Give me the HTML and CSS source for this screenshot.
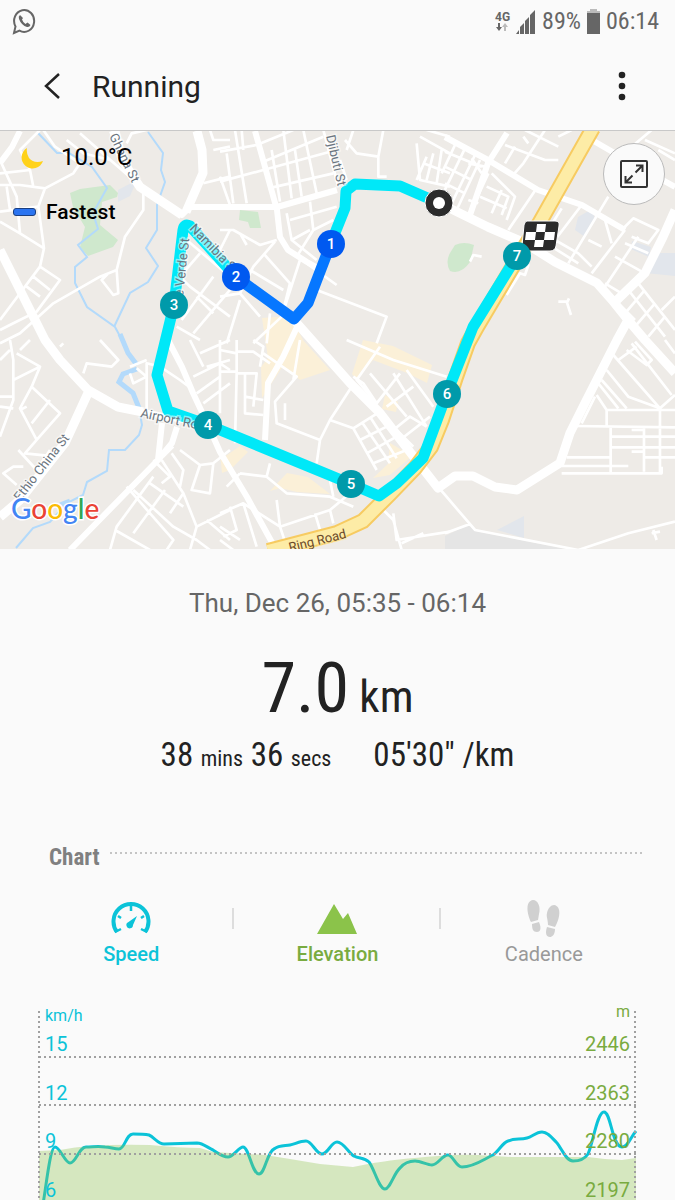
FILE: index.html
```html
<!DOCTYPE html>
<html lang="en">
<head>
    <meta charset="UTF-8">
    <meta name="viewport" content="width=device-width, initial-scale=1.0">
    <title>Running</title>
    <link rel="stylesheet" href="styles.css">
</head>
<body>

<!-- Status bar -->
<div class="status">
    <svg class="status-app" width="24" height="28" viewBox="0 0 24 28" fill="none" stroke="#666" stroke-width="2">
        <path d="M2 26L3.500 19.500A10 11 0 1 1 7.500 23.700Z"/>
        <path d="M8 8q-2 1.500-1 4q2.500 6.500 8 8q2.500 .5 3.500-2l-3-2.500l-2 1.500q-2.500-1.500-3.500-4.500l1-1.500z" fill="#666" stroke="none"/>
    </svg>
    <div class="status-right">
        <div class="network">
            <span>4G</span>
            <svg width="14" height="8" viewBox="0 0 14 8"><path d="M3 0h2v4h2l-3 4l-3-4h2z" fill="#666"/><path d="M9 8h2v-4h2l-3-4l-3 4h2z" fill="#bbb"/></svg>
        </div>
        <svg width="20" height="25" viewBox="0 0 20 25" fill="#666"><path d="M0 25l3-4v4zM4 25v-7l4-4v11zM9 25v-13l4-4v17zM14 25v-19l5-5v24z"/></svg>
        <span>89%</span>
        <svg width="13" height="25" viewBox="0 0 13 25"><path d="M3 0h7v2h3v4h-13v-4h3z" fill="#bbb"/><path d="M0 4h13v21h-13z" fill="#666"/></svg>
        <span>06:14</span>
    </div>
</div>

<!-- Title bar -->
<header class="header">
    <button class="icon-button" aria-label="Back">
        <svg width="20" height="30" viewBox="0 0 20 30" fill="none" stroke="#222" stroke-width="2.500"><path d="M17 3L4 15L17 27"/></svg>
    </button>
    <h1>Running</h1>
    <button class="icon-button" aria-label="More options">
        <svg width="20" height="30" viewBox="0 0 20 30" fill="#222"><circle cx="10" cy="4" r="3.300"/><circle cx="10" cy="15" r="3.300"/><circle cx="10" cy="26" r="3.300"/></svg>
    </button>
</header>

<!-- Route map -->
<section class="map">
    <svg class="map-canvas" viewBox="0 131 675 418">
        <path class="block" d="M0 131H675V549H0Z"/>
        <path class="ground" d="M445 536L468 525L475 531L575 551H445Z"/>

        <!-- parks, water and shops -->
        <path class="park" d="M70 193L80 189L110 185L118 193L117 197L102 202L100 225L118 240L113 247L88 256L80 247L85 227L73 207Z"/>
        <path class="park" d="M240 210L258 212L261 228L250 228L248 222L239 220Z"/>
        <path class="park" d="M455 245Q464 241 474 245L470 262Q461 275 450 271Q445 262 450 253Z"/>
        <path class="pond" d="M118 190L137 180L130 196L118 202ZM578 217L592 209L595 220L585 237L575 230ZM648 253H675V276L645 273ZM632 241L651 247L649 257L631 249ZM497 530L524 516V538Z"/>
        <path class="shops" d="M262 318L291 316L303 340L330 370L300 380L283 366L262 398L261 367L268 358ZM363 340L393 346L432 365L427 383L407 373L373 360L357 380L352 374ZM390 443L412 456L390 475L373 478L388 464ZM287 473L308 477L330 494L297 492L280 488L270 491ZM220 460L240 446L248 452L230 470ZM220 453L230 470L222 473ZM385 395L398 402L396 412L382 409Z"/>
        <path class="river" d="M38 133L57 153L69 153L92 167L107 188L93 213L98 229L78 245L87 257L75 267V283L87 307L115 327L122 340L128 353L137 365M148 132L163 153L161 170L165 182L157 205V230L146 248L158 266L148 282L130 293L114 327M139 408L142 425L139 435L125 450H109L107 471L87 482L83 495L67 503L50 522L33 528L16 548"/>
        <path class="river wide" d="M120 334L128 353L137 365M137 369L123 374L119 382L133 393L139 408M60 505L70 501"/>

        <!-- side streets -->
        <g class="street" transform="translate(0 130) scale(.3333)">
            <path d="M130 0L165 50L240 100L220 130L135 175L115 230L132 355L120 410L180 450L110 545L40 580L0 600M0 165L60 165L135 175M0 245L115 230M0 275L60 310L132 355M0 90L50 200L60 310M20 170L30 240M100 170L90 120L60 60L120 0M90 120L0 130M240 10L320 80L400 150M200 30L250 70L330 90M430 185V240L375 320L350 420L300 440L160 520L60 610L0 640M350 420L355 490L340 495L305 450L325 430M120 410L60 490L0 570M80 470L120 500M100 440L150 480M380 40L395 10L440 0"/>
            <path d="M610 160L690 140M660 140L690 225M630 0L640 30L690 30M640 60L690 50M560 330L690 440M600 370L540 440M540 440L570 470L690 560M545 570L640 440M580 610L690 480M530 590L600 630M590 500L640 550M690 300L640 400"/>
        </g>
        <g class="street" transform="translate(220 130) scale(.3333)">
            <path d="M0 65L110 45L220 0M0 155L130 120L330 65M130 95L310 20M145 175L340 130M45 0L80 220M20 70L40 220M190 0L215 205M250 0L290 190M155 60L180 215M225 60L245 200M310 0L355 170M70 60L65 0M375 30L410 70L475 80L475 140L500 140M380 60L400 0M475 80L490 0M360 90L380 150"/>
            <path d="M590 40L600 150L690 170M620 80L590 150M600 20L690 70M640 70L620 150M665 60L650 160M610 100L690 130M690 20L620 0M200 250L215 330L290 390M270 215L280 300L230 380M210 270L350 230M280 300L340 270M215 330L270 300M0 300H40L120 345L170 330M60 490L100 410L165 335M0 500L60 490L120 560M130 370L210 460L190 540M240 390L185 560L100 640M290 480L500 560L470 640M90 420L190 480M60 510L20 640M150 550L140 640M60 310L80 345M260 400L350 465"/>
        </g>
        <g class="street" transform="translate(445 130) scale(.3333)">
            <path d="M30 45L-10 130M60 55L-20 220M90 75L20 220M105 90L35 240M0 110L80 150M0 65L110 110M0 160L60 190M70 100L120 110M80 85L110 130M130 130L70 260M140 130L210 200L185 270M125 170L190 200L170 255M170 180L140 250M105 200L185 235M100 220L70 210M180 45L300 90L340 90M240 0L340 50M235 20L250 40M300 0L235 100L200 140M180 100L210 50M275 175L190 300M340 20L380 0"/>
            <path d="M490 200L370 400M350 235L310 300M410 225L330 330L400 370L440 410M430 330L470 350M540 300L440 430M580 320L480 470M320 350L400 400M480 270L500 340M530 300L565 265L640 300L610 340L560 320M510 380L600 430M540 340L610 370M480 460L530 490M620 0L560 50M600 30L690 70M690 90L640 60M580 460L690 600M550 480L660 620M520 520L570 570M600 480L540 550M630 520L570 590M660 560L610 620M690 500L650 540"/>
            <path class="stub" d="M230 400L250 405L240 435L225 430L185 495M75 395L85 375L110 380M340 515L365 515L378 555M365 520L372 505"/>
        </g>
        <g class="street" transform="translate(0 340) scale(.3333)">
            <path d="M30 0L40 60L40 180L0 290M0 60L30 30M0 170H40M0 200L40 205M50 40L120 80L40 120M120 80L95 140L60 205L110 300L75 340L170 350M95 140L180 220L110 300M150 180L95 250M60 210L80 200M55 330L110 390L150 330M70 380H40L10 400L50 435M300 0L355 60L335 80L260 70L250 100M180 20L190 10M60 30L90 0M390 80L440 60M390 100L400 130L440 110V70L480 80M440 100V230M480 80L540 120L580 150M410 85L440 110"/>
            <path d="M570 0L610 80M660 0V220M600 40L690 0M620 80L690 60M580 110L660 70L690 90M590 160L660 110M610 190L690 130M400 450L520 560L590 600L630 630M345 570L450 630M460 410L350 560L330 630M380 440L520 600L500 630M495 450L400 580M540 330L600 375L640 370L690 330M600 375L575 450L630 460L640 370M485 360L550 460L510 520M515 340L550 390L540 440M550 460L590 560L690 510M590 560L570 630M450 430L550 500M620 540L690 600M460 360L510 410L485 430M520 320L490 350"/>
        </g>
        <g class="street" transform="translate(220 340) scale(.3333)">
            <path d="M50 0V100L45 310M0 30L50 40M0 95H50M50 100H110L100 200M75 100V220L130 225M75 170L130 180M50 35H100L150 70M100 0L130 20L120 80M130 40L230 110L165 185L170 250L300 300L330 240L395 140M300 300L290 370M195 190V240M240 0L220 120M330 240L400 265L470 390M400 265L480 215M425 245L510 370M450 230L530 355M470 210L580 320M420 300L500 260M440 340L530 290M460 370L560 330M520 270L570 230L620 260M540 300L630 230M500 200L580 140M470 190L430 130L400 110M480 20L410 120L470 190L540 100M380 0L520 60L680 110M520 100L620 260M560 90L640 200M450 100L560 230"/>
            <path d="M0 520L70 490L180 560L330 510L390 460M70 490L110 620M0 600L40 630M180 560L200 620M60 400L140 410L200 460L330 470L400 500M60 400L20 440M140 410L150 370M170 480L180 560M285 520L300 570M330 510L340 550M480 500L520 540L545 630M520 520L530 600L690 575M545 610L610 580M0 560L60 600M30 500L50 570L10 590M330 420L340 470"/>
        </g>
        <g class="street" transform="translate(445 340) scale(.3333)">
            <path d="M485 90L550 170L645 205M505 45L645 205L690 165M520 60L575 20M545 30L605 75L620 60L570 5M560 10L680 165M660 0L690 40M485 210H690M390 258L690 262M500 290H690M500 322H690M365 352H495M597 352H690M350 378H550M350 400H650V380M485 210V258M497 258V400M597 262V395M645 205V400M470 120L545 205M460 130L520 205M455 165L485 210M450 170L410 250M560 270H597M560 335H597M0 465L90 570L400 630L550 580L690 545M0 580L75 552M625 570L635 600M620 580L645 575M-30 430L0 465"/>
        </g>

        <!-- main roads -->
        <path class="road" d="M20 131L12 147L0 163M112 131L122 160L140 187L182 215L190 207H277L337 190M197 131L202 150L203 173L186 212M255 131L277 210L280 237L288 250L307 262L325 272M0 250L20 290L45 340L60 360L88 390L118 407L143 412L208 425M70 550L158 460L162 423M177 427L172 443L158 460M168 340L182 367L193 393L208 425L220 452L247 497L275 548M298 325L283 357L268 383L265 440M445 137L488 160L538 190L582 205L625 230M507 133L488 163L470 215M592 140L630 162L675 187"/>
        <path class="road major" d="M0 250L20 290L45 340L60 360L88 390L118 407L143 412M88 393L65 443L20 500L0 517M294 320L350 383L380 413L410 452L438 488L455 476H473L495 487L517 490L560 463L570 433L585 403L617 340L628 320L612 300L597 283L555 262L525 243L488 227L439 203M617 300L645 273L663 237L675 210M612 300L628 320L645 340L675 373M115 131L122 160L140 187L182 215M197 131L202 150L203 173L186 212"/>
        <path class="ring-edge" d="M593 128L540 222L516 261L477 327L468 343L456 377L442 420L431 447L415 468L390 494L363 521L337 533L268 551"/>
        <path class="ring" d="M593 128L540 222L516 261L477 327L468 343L456 377L442 420L431 447L415 468L390 494L363 521L337 533L268 551"/>

        <!-- recorded route -->
        <path class="route" d="M439 203L400 186L355 184L346 191L345 208L331 243M236 277L190 226Q184 223 183 230L174 305L157 375L168 411L208 425L351 484L379 496L397 483L423 458L447 393L473 327L517 256"/>
        <path class="route fastest" d="M331 243L308 303L294 319L236 277"/>

        <g class="street-name">
            <text transform="translate(109 136) rotate(64)">Ghana St</text>
            <text transform="translate(326 136) rotate(77)">Djibuti St</text>
            <text transform="translate(189 229) rotate(46)">Namibia St</text>
            <text transform="translate(183 297) rotate(-84)">e Verde St</text>
            <text transform="translate(140 417) rotate(12)">Airport Road</text>
            <text transform="translate(20 502) rotate(-52)">Ethio China St</text>
            <text class="ring-name" transform="translate(290 552) rotate(-14)">Ring Road</text>
        </g>

        <!-- finish flag and start point -->
        <path d="M527 221H555Q560 221 559 226L556 246Q555 251 550 251H526Q521 251 522 246L524 225Q525 221 527 221Z" fill="#2b2b2b" stroke="#fff"/>
        <path d="M537 224H546L545 232H536ZM526 232H536L535 240H525ZM545 232H555L554 240H544ZM535 240H544L543 247H534Z" fill="#fff"/>
        <circle cx="439" cy="203" r="14" fill="#2b2b2b" stroke="#fff"/>
        <circle cx="439" cy="203" r="6" fill="#fff"/>

        <g class="marker">
            <circle class="fast" cx="331" cy="244" r="14"/><text x="331" y="249">1</text>
            <circle class="fast" cx="236" cy="277" r="14"/><text x="236" y="282">2</text>
            <circle cx="174" cy="305" r="14"/><text x="174" y="310">3</text>
            <circle cx="208" cy="425" r="14"/><text x="208" y="430">4</text>
            <circle cx="351" cy="484" r="14"/><text x="351" y="489">5</text>
            <circle cx="447" cy="394" r="14"/><text x="447" y="399">6</text>
            <circle cx="517" cy="256" r="14"/><text x="517" y="261">7</text>
        </g>

        <text class="google" x="11" y="519"><tspan fill="#4285f4">G</tspan><tspan fill="#ea4335">o</tspan><tspan fill="#fbbc05">o</tspan><tspan fill="#4285f4">g</tspan><tspan fill="#34a853">l</tspan><tspan fill="#ea4335">e</tspan></text>
    </svg>

    <div class="map-info">
        <div class="weather">
            <svg width="24" height="24" viewBox="0 0 24 24"><path d="M7 3A11 11 0 1 0 23 16Q14 19 9 13Q6 8 7 3Z" fill="#ffd21a"/></svg>
            <span>10.0°C</span>
        </div>
        <div class="legend"><i></i><span>Fastest</span></div>
    </div>
    <button class="expand" aria-label="Full screen map">
        <svg width="28" height="28" viewBox="0 0 28 28" fill="none" stroke="#333" stroke-width="2"><rect x="1" y="1" width="26" height="26" rx="1"/><path d="M15.500 12.500L22 6M16 5.500H22.500V12M12.500 15.500L6 22M5.500 16V22.500H12"/></svg>
    </button>
</section>

<!-- Summary -->
<section class="summary">
    <p class="date">Thu, Dec 26, 05:35 - 06:14</p>
    <p class="distance">7.0<small> km</small></p>
    <div class="stats">
        <span>38 <small>mins</small> 36 <small>secs</small></span>
        <span>05'30" /km</span>
    </div>
</section>

<!-- Chart -->
<section>
    <div class="chart-title"><h2>Chart</h2><span class="dots"></span></div>
    <div class="tabs">
        <button class="tab speed">
            <svg width="40" height="40" viewBox="0 0 40 40" fill="none" stroke="currentColor">
                <path d="M6 35A17.500 17.500 0 1 1 34 35" stroke-width="4"/>
                <path d="M20 8V14M7 19L10 21M33 19L30 21M4 35L10 32M36 35L30 32" stroke-width="2.500"/>
                <path d="M26 19L22 28A3.300 3.300 0 1 1 17.500 25Z" fill="currentColor" stroke="none"/>
            </svg>
            Speed
        </button>
        <button class="tab elevation">
            <svg width="40" height="40" viewBox="0 0 40 40"><path d="M0 37L17 7L26 22L31 16L40 37Z" fill="#8bc34a"/></svg>
            Elevation
        </button>
        <button class="tab cadence">
            <svg width="40" height="40" viewBox="0 0 40 40" fill="#d0d0d0">
                <path d="M9 3C14 3 17 10 15 17L14 23L7 25C3 17 1 4 9 3ZM8 27L15 25C18 32 16 35 13 35C9 35 8 32 8 27Z"/>
                <path d="M30 8C38 9 36 22 31 30L24 28C24 22 22 20 23 16C24 11 27 8 30 8ZM23 30L31 32C31 38 28 40 26 40C22 40 21 36 23 30Z"/>
            </svg>
            Cadence
        </button>
    </div>

    <svg class="chart" viewBox="0 0 675 200">
        <path class="speed-line" d="M43 204C46 188 50 147 55 147C60 147 65 163 70 163C76 163 79 147 86 147C93 147 98 146 105 147C110 147 114 149 119 149C125 149 126 134 133 134C139 134 144 134 149 135C154 137 158 144 164 144L197 143C203 143 208 148 213 150C218 153 222 157 228 157C233 157 239 147 243 147C249 147 252 174 259 174C265 174 267 152 274 149C279 145 285 146 290 145C295 144 300 141 306 141C312 141 316 154 322 154C328 154 331 142 337 142C344 142 349 154 354 156C359 159 364 157 369 162C374 168 379 189 385 189C390 189 394 173 400 168C405 162 410 161 415 161C421 161 427 165 432 165C438 165 442 155 448 155C453 155 456 167 462 167C474 167 484 159 493 155C499 151 502 143 508 141C515 138 520 140 527 138C532 137 536 132 542 132C548 132 552 138 557 143C562 149 566 161 573 161C579 161 584 160 588 154C593 144 597 112 604 112C611 112 612 147 622 147C628 147 630 138 636 131"/>
        <path class="elevation-area" d="M39 151L60 150Q75 147 90 146Q120 144 150 145Q180 148 200 148L213 152L265 155L290 159L320 164L353 167L368 164Q395 159 438 156Q460 154 478 155L512 157H588L605 159L622 160L636 158V204H39Z"/>
        <path class="grid" d="M39 57H636M39 105H636M39 154H636M39 11V200M635 11V200"/>
        <g class="speed-scale">
            <text class="unit" x="45" y="21">km/h</text>
            <text x="45" y="51">15</text>
            <text x="45" y="100">12</text>
            <text x="45" y="148">9</text>
            <text x="45" y="197">6</text>
        </g>
        <g class="elevation-scale">
            <text class="unit" x="630" y="17">m</text>
            <text x="630" y="51">2446</text>
            <text x="630" y="100">2363</text>
            <text x="630" y="148">2280</text>
            <text x="630" y="197">2197</text>
        </g>
    </svg>
</section>

</body>
</html>
```
FILE: styles.css
```css
/* Global */
body {
    margin: 0;
    background-color: #fafafa;
    color: #222;
    font-family: Roboto, sans-serif;
}

h1, h2, p {
    margin: 0;
    font-weight: 400;
}

svg {
    display: block;
    flex-shrink: 0;
}

button {
    border: 0;
    padding: 0;
    background: none;
    color: inherit;
    font-family: inherit;
    cursor: pointer;
}

/* Status bar */
.status {
    display: flex;
    justify-content: space-between;
    align-items: center;
    height: 42px;
    padding: 0 16px 0 12px;
    color: #666;
    font-family: "Roboto Condensed", Roboto, sans-serif;
    font-size: 24px;
}

.status-right {
    display: flex;
    align-items: center;
    gap: 6px;
}

.network {
    font-family: Roboto, sans-serif;
    font-size: 12px;
    font-weight: 700;
    line-height: 12px;
}

/* Title bar */
.header {
    display: flex;
    align-items: center;
    gap: 30px;
    height: 88px;
    padding: 0 43px 0 42px;
    border-bottom: 1px solid #c8c8c8;
}

.header h1 {
    flex: 1;
    font-size: 30px;
}

/* Map */
.map {
    position: relative;
}

.map-canvas {
    width: 100%;
    height: auto;
}

.block { fill: #eeebe7; }
.ground { fill: #e5e5e5; }
.park { fill: #cfe8cd; }
.pond { fill: #e2e6ec; }
.shops { fill: #fbf0d8; }

.river {
    fill: none;
    stroke: #b3dafb;
    stroke-width: 2;
}

.river.wide {
    stroke-width: 5;
}

.street {
    fill: none;
    stroke: #fff;
    stroke-width: 8;
    stroke-linejoin: round;
}

.road {
    fill: none;
    stroke: #fff;
    stroke-width: 6;
    stroke-linejoin: round;
}

.road.major {
    stroke-width: 9;
}

.ring-edge, .ring {
    fill: none;
    stroke: #f7cb61;
    stroke-width: 16;
}

.ring {
    stroke: #fdeca6;
    stroke-width: 12;
}

.route {
    fill: none;
    stroke: #00e8f8;
    stroke-width: 11;
    stroke-linejoin: round;
}

.route.fastest {
    stroke: #0677ff;
}

.street-name {
    fill: #6b7580;
    stroke: #fff;
    stroke-opacity: 0.5;
    stroke-width: 3px;
    paint-order: stroke;
    font-size: 13px;
}

.ring-name {
    fill: #6b4a2a;
    stroke: #fdeca6;
}

.marker {
    fill: #009aaa;
    font-size: 15px;
    font-weight: 500;
    text-anchor: middle;
}

.marker .fast {
    fill: #0059f0;
}

.marker text {
    fill: #fff;
}

.google {
    font-family: Lato, sans-serif;
    font-size: 28px;
    font-weight: 500;
    stroke: #fff;
    stroke-width: 3px;
    paint-order: stroke;
}

/* Overlays on the map */
.map-info {
    position: absolute;
    top: 12px;
    left: 13px;
    color: #000;
}

.weather {
    display: flex;
    align-items: center;
    gap: 17px;
    padding-left: 7px;
    font-size: 24px;
    line-height: 28px;
}

.legend {
    display: flex;
    align-items: center;
    gap: 10px;
    margin-top: 28px;
    font-size: 21px;
    font-weight: 500;
    line-height: 26px;
}

.legend i {
    box-sizing: border-box;
    width: 23px;
    height: 8px;
    border: 1px solid #1b3f80;
    border-radius: 3px;
    background-color: #2b74f0;
}

.expand {
    position: absolute;
    top: 12px;
    right: 10px;
    display: flex;
    justify-content: center;
    align-items: center;
    width: 62px;
    height: 62px;
    border: 1px solid #bbb;
    border-radius: 50%;
    background-color: #fafafa;
}

/* Summary */
.summary {
    padding-top: 36px;
    text-align: center;
}

.date {
    color: #666;
    font-size: 26px;
    line-height: 36px;
}

.distance {
    margin-top: 31px;
    font-family: "Roboto Condensed", Roboto, sans-serif;
    font-size: 70px;
    line-height: 72px;
}

.distance small {
    font-size: 45px;
}

.stats {
    display: flex;
    justify-content: center;
    gap: 42px;
    font-family: "Roboto Condensed", Roboto, sans-serif;
    font-size: 33px;
    line-height: 44px;
}

.stats small {
    font-size: 22px;
}

/* Chart */
.chart-title {
    display: flex;
    gap: 10px;
    margin-top: 63px;
    padding: 0 30px 0 49px;
}

.chart-title h2 {
    color: #808080;
    font-family: "Roboto Condensed", Roboto, sans-serif;
    font-size: 23px;
    font-weight: 700;
    line-height: 28px;
}

.dots {
    flex: 1;
    height: 2px;
    margin-top: 8px;
    background: repeating-linear-gradient(to right, #c4c4c4 0 2px, transparent 2px 5px);
}

.tabs {
    display: grid;
    grid-template-columns: 1fr 1fr 1fr;
    margin-top: 25px;
    padding: 0 28px;
}

.tab {
    display: flex;
    flex-direction: column;
    align-items: center;
    gap: 4px;
    font-size: 20px;
    font-weight: 500;
    line-height: 26px;
    background: linear-gradient(#ddd, #ddd) no-repeat right 11px / 2px 21px;
}

.speed { color: #0bc3d8; }
.elevation { color: #79ab40; }

.tab.cadence {
    background: none;
    color: #999;
    font-weight: 400;
}

.chart {
    width: 100%;
    height: auto;
    margin-top: 33px;
    font-size: 20px;
}

.speed-line {
    fill: none;
    stroke: #0bc3d8;
    stroke-width: 3;
    stroke-linejoin: round;
}

.elevation-area {
    fill: #8bc34a;
    fill-opacity: 0.33;
}

.grid {
    fill: none;
    stroke: #a0a0a0;
    stroke-width: 2;
    stroke-dasharray: 2 3;
}

.speed-scale {
    fill: #0bc3d8;
}

.elevation-scale {
    fill: #79ab40;
    text-anchor: end;
}

.unit {
    font-size: 16px;
}
```
